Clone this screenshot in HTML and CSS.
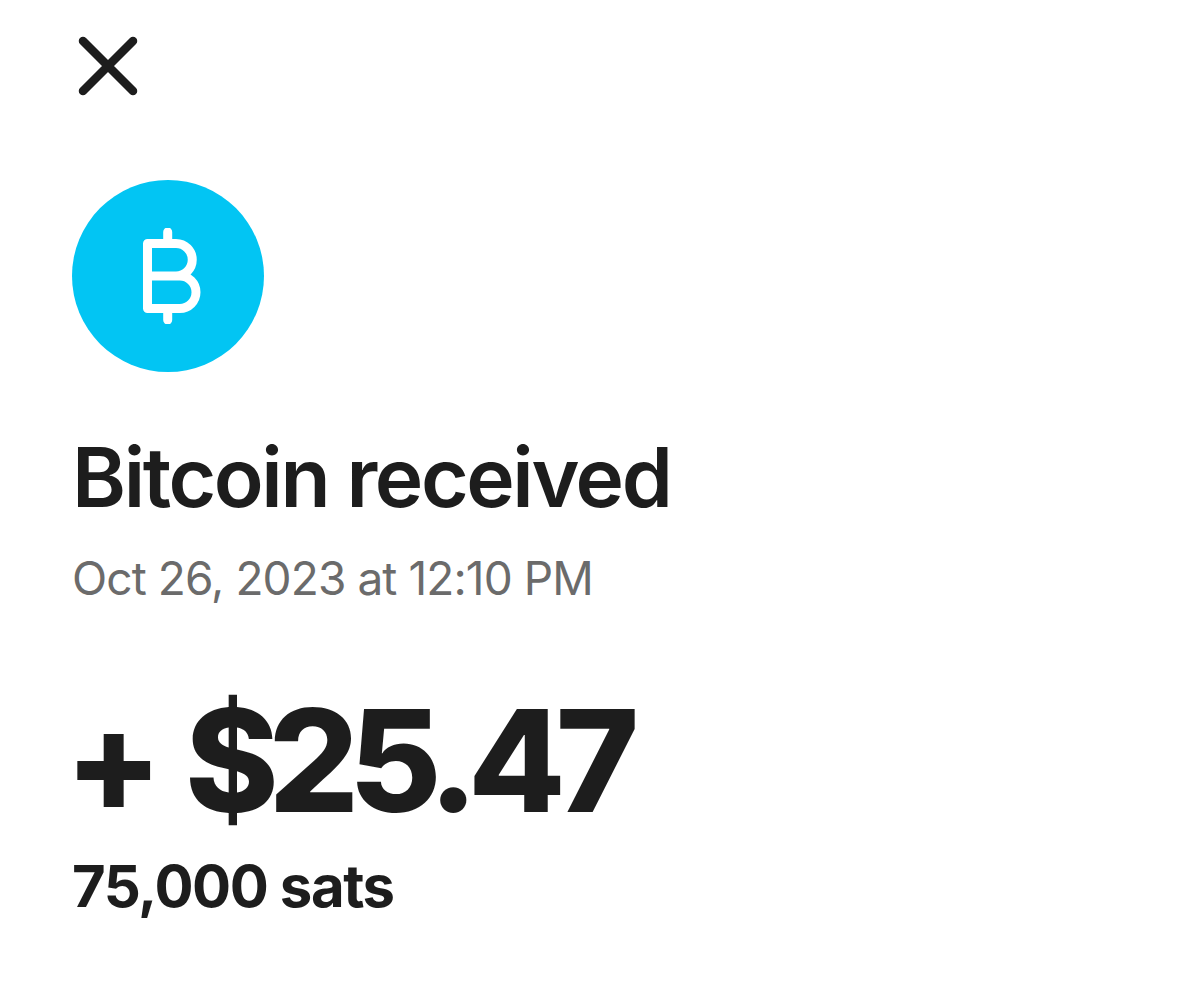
FILE: index.html
```
<!DOCTYPE html>
<html lang="en">
<head>
<meta charset="utf-8">
<title>Bitcoin received</title>
<link rel="stylesheet" href="styles.css">
</head>
<body>
<main class="page">
<button class="close" aria-label="Close">
<svg viewBox="0 0 60 60" width="60" height="60"><path d="M5 5L55 55M55 5L5 55" fill="none" stroke="#1d1d1d" stroke-width="8.5" stroke-linecap="round"/></svg>
</button>
<div class="badge">
<svg viewBox="0 0 100 96" width="100" height="96"><path d="M29.5 15.5H58A16.25 16.25 0 0 1 58 48H29.5ZM29.5 48H61.75A16.25 16.25 0 0 1 61.75 80.5H29.5ZM49.7 4V15.5M49.7 80.5V92" fill="none" stroke="#fff" stroke-width="9" stroke-linecap="round" stroke-linejoin="round"/></svg>
</div>
<h1 class="title">Bitcoin received</h1>
<p class="date">Oct 26, 2023 at 12:10 PM</p>
<p class="amount">+ $25.47</p>
<p class="sats">75,000 sats</p>
</main>
</body>
</html>
```
FILE: styles.css
```
html, body { margin: 0; background: #fff; }
body { font-family: Inter, "Liberation Sans", sans-serif; color: #1d1d1d; }
.page { display: flex; flex-direction: column; align-items: flex-start; padding: 36px 0 0 72px; }
.close { padding: 0; margin: 0 0 84px 6px; border: 0; background: none; display: block; line-height: 0; }
.badge { width: 192px; height: 192px; border-radius: 50%; background: #02c5f3; display: flex; align-items: center; justify-content: center; }
.title { margin: 64px 0 0; font-size: 82px; line-height: 84px; font-weight: 600; letter-spacing: -2.4px; }
.date { margin: 30px 0 0; font-size: 46px; line-height: 56px; font-weight: 400; color: #6b6b6b; letter-spacing: -0.9px; }
.amount { margin: 79px 0 0 -7px; font-size: 142px; line-height: 150px; font-weight: 800; letter-spacing: -10.2px; word-spacing: 12px; }
.sats { margin: 19px 0 0; font-size: 58px; line-height: 64px; font-weight: 700; letter-spacing: -1.4px; }
```
